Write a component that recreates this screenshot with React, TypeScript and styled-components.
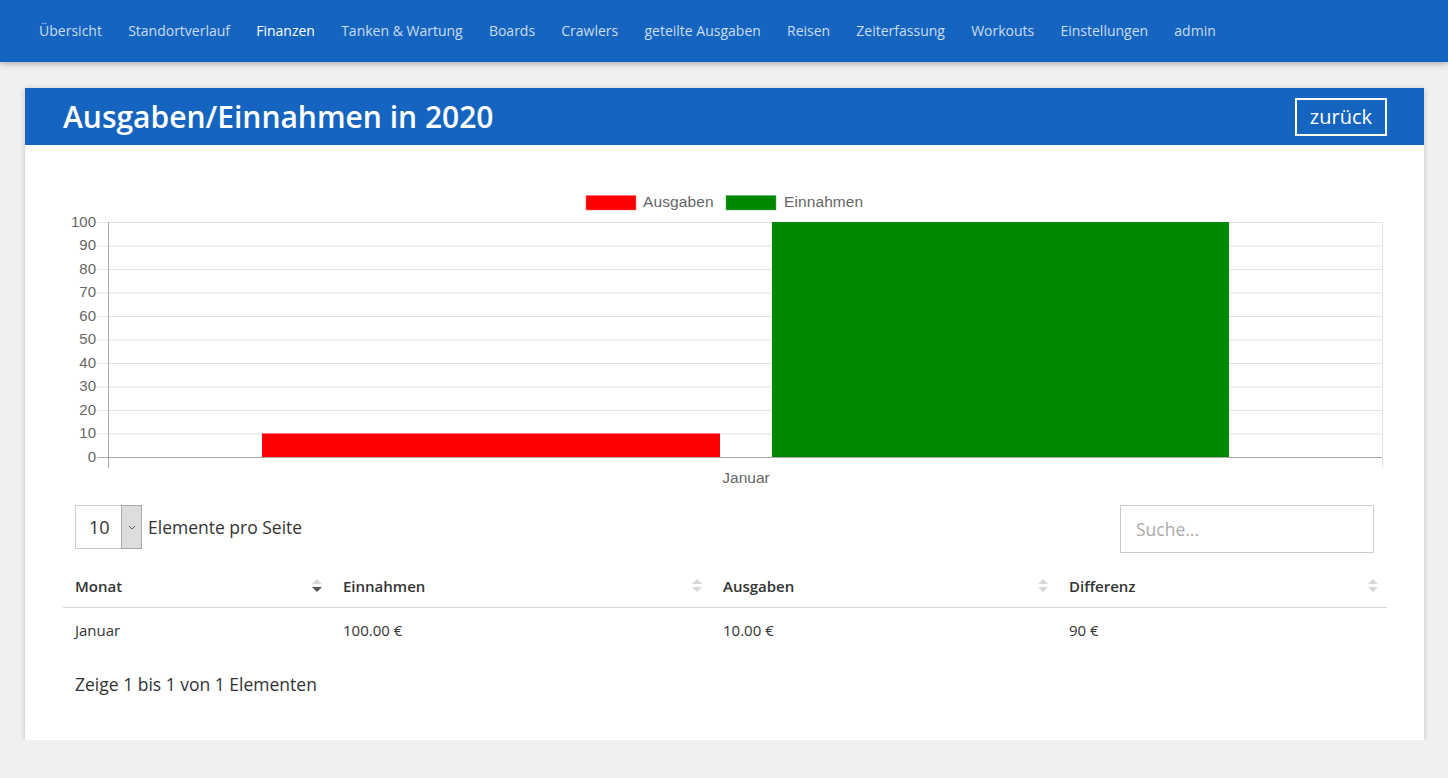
import React from "react";
import styled, { createGlobalStyle } from "styled-components";

const Global = createGlobalStyle`
  html, body { margin: 0; padding: 0; }
  body {
    background: #f0f0f0;
    font-family: "Open Sans", "Liberation Sans", sans-serif;
    color: #333;
  }
  * { box-sizing: border-box; }
`;

const Nav = styled.nav`
  height: 62px;
  background: #1565c0;
  box-shadow: 0 2px 6px rgba(0, 0, 0, 0.28);
  display: flex;
  align-items: center;
  padding-left: 26px;
`;

const NavLink = styled.a<{ $active?: boolean }>`
  font-size: 14px;
  padding: 0 13.1px;
  color: ${(p) => (p.$active ? "#ffffff" : "rgba(255,255,255,0.78)")};
  text-decoration: none;
  line-height: 20px;
  white-space: nowrap;
`;

const Card = styled.section`
  margin: 26px 24px 0 25px;
  background: #fff;
  box-shadow: 0 1px 6px rgba(0, 0, 0, 0.2);
`;

const CardHeader = styled.header`
  height: 57px;
  background: #1565c0;
  display: flex;
  align-items: center;
  justify-content: space-between;
  padding: 0 37px 0 38px;
`;

const Title = styled.h1`
  margin: 0;
  color: #fff;
  font-size: 30px;
  font-weight: 600;
  line-height: 1;
  padding-top: 1px;
`;

const BackButton = styled.button`
  height: 38px;
  padding: 0 13px;
  border: 2px solid #fff;
  background: transparent;
  color: #fff;
  font-family: inherit;
  font-size: 20px;
  line-height: 1;
  margin-top: 1px;
`;

const CardBody = styled.div`
  padding: 35px 38px 44px 38px;
`;

const ChartSvg = styled.svg`
  display: block;
  width: 1324px;
  height: 310px;
  font-family: "Liberation Sans", Arial, sans-serif;
`;

const Controls = styled.div`
  margin-top: 15px;
  padding: 0 12px;
  display: flex;
  justify-content: space-between;
  align-items: flex-start;
`;

const LengthWrap = styled.label`
  display: flex;
  align-items: center;
  gap: 6px;
  font-size: 17.5px;
  color: #333;
`;

const FakeSelect = styled.div`
  width: 67px;
  height: 44px;
  border: 1px solid #ccc;
  display: flex;
  align-items: stretch;
  justify-content: space-between;
  font-size: 18px;
`;

const SelectValue = styled.span`
  display: flex;
  align-items: center;
  padding-left: 13px;
`;

const SelectArrow = styled.span`
  width: 21px;
  background: #dddddd;
  border: 1px solid #a9a9a9;
  margin: -1px -1px -1px 0;
  display: flex;
  align-items: center;
  justify-content: center;
`;

const SearchInput = styled.input`
  width: 254px;
  height: 48px;
  border: 1px solid #ccc;
  padding: 0 15px;
  font-family: inherit;
  font-size: 17.5px;
  color: #333;
  outline: none;
  &::placeholder { color: #aaa; }
`;

const Table = styled.table`
  margin-top: 12px;
  width: 1324px;
  border-collapse: collapse;
  table-layout: fixed;
`;

const Th = styled.th`
  text-align: left;
  font-size: 15px;
  font-weight: 600;
  color: #333;
  height: 42px;
  padding: 0 12px;
  border-bottom: 1px solid #d6d6d6;
`;

const ThInner = styled.div`
  display: flex;
  align-items: center;
  justify-content: space-between;
`;

const SortIcon = styled.span<{ $down?: boolean }>`
  display: inline-flex;
  flex-direction: column;
  gap: 3px;
  margin-right: -3px;
  &::before, &::after {
    content: "";
    width: 0;
    height: 0;
    border-left: 5px solid transparent;
    border-right: 5px solid transparent;
  }
  &::before {
    border-bottom: 5px solid #d8d8d8;
  }
  &::after {
    border-top: 5px solid ${(p) => (p.$down ? "#555" : "#d8d8d8")};
  }
`;

const Td = styled.td`
  font-size: 15px;
  color: #333;
  height: 45px;
  padding: 0 12px;
`;

const Info = styled.div`
  margin-top: 20px;
  padding-left: 12px;
  font-size: 17.5px;
  color: #333;
`;

const navItems = [
  "Übersicht",
  "Standortverlauf",
  "Finanzen",
  "Tanken & Wartung",
  "Boards",
  "Crawlers",
  "geteilte Ausgaben",
  "Reisen",
  "Zeiterfassung",
  "Workouts",
  "Einstellungen",
  "admin",
];

const Y0 = 277;
const unit = 2.35;
const yOf = (v: number) => Y0 - v * unit;

function Chart() {
  const ticks = [0, 10, 20, 30, 40, 50, 60, 70, 80, 90, 100];
  return (
    <ChartSvg viewBox="0 0 1324 310">
      <rect x={523} y={15.5} width={50} height={14.5} fill="#ff0000" stroke="#ff6666" strokeWidth={0.5} />
      <text x={580} y={23} fontSize={15.5} fill="#666" dominantBaseline="middle" letterSpacing="0.1">
        Ausgaben
      </text>
      <rect x={663} y={15.5} width={50} height={14.5} fill="#008800" stroke="#66aa66" strokeWidth={0.5} />
      <text x={721} y={23} fontSize={15.5} fill="#666" dominantBaseline="middle" letterSpacing="0.1">
        Einnahmen
      </text>
      {ticks.map((t) => (
        <g key={t}>
          <line
            x1={34}
            x2={1319}
            y1={yOf(t) + 0.5}
            y2={yOf(t) + 0.5}
            stroke={t === 0 ? "#a8a8a8" : "#e3e3e3"}
            strokeWidth={1}
          />
          <text x={33} y={yOf(t) + 1} fontSize={15} fill="#666" textAnchor="end" dominantBaseline="middle">
            {t}
          </text>
        </g>
      ))}
      <line x1={45.5} x2={45.5} y1={42} y2={288} stroke="#a8a8a8" />
      <line x1={1319.5} x2={1319.5} y1={42} y2={288} stroke="#e3e3e3" />
      <rect x={199} y={yOf(10)} width={458} height={10 * unit} fill="#ff0000" />
      <rect x={709} y={yOf(100)} width={457} height={100 * unit} fill="#008800" />
      <text x={683} y={299} fontSize={15.5} fill="#666" textAnchor="middle" dominantBaseline="middle">
        Januar
      </text>
    </ChartSvg>
  );
}

export default function App() {
  return (
    <>
      <Global />
      <Nav>
        {navItems.map((n) => (
          <NavLink key={n} href="#" $active={n === "Finanzen"}>
            {n}
          </NavLink>
        ))}
      </Nav>
      <Card>
        <CardHeader>
          <Title>Ausgaben/Einnahmen in 2020</Title>
          <BackButton>zurück</BackButton>
        </CardHeader>
        <CardBody>
          <Chart />
          <Controls>
            <LengthWrap>
              <FakeSelect>
                <SelectValue>10</SelectValue>
                <SelectArrow>
                  <svg width="8" height="5" viewBox="0 0 8 5">
                    <path d="M1 1 L4 4 L7 1" fill="none" stroke="#555" strokeWidth="1" />
                  </svg>
                </SelectArrow>
              </FakeSelect>
              Elemente pro Seite
            </LengthWrap>
            <SearchInput placeholder="Suche..." />
          </Controls>
          <Table>
            <colgroup>
              <col style={{ width: 268 }} />
              <col style={{ width: 380 }} />
              <col style={{ width: 346 }} />
              <col style={{ width: 330 }} />
            </colgroup>
            <thead>
              <tr>
                <Th>
                  <ThInner>
                    Monat <SortIcon $down />
                  </ThInner>
                </Th>
                <Th>
                  <ThInner>
                    Einnahmen <SortIcon />
                  </ThInner>
                </Th>
                <Th>
                  <ThInner>
                    Ausgaben <SortIcon />
                  </ThInner>
                </Th>
                <Th>
                  <ThInner>
                    Differenz <SortIcon />
                  </ThInner>
                </Th>
              </tr>
            </thead>
            <tbody>
              <tr>
                <Td>Januar</Td>
                <Td>100.00 €</Td>
                <Td>10.00 €</Td>
                <Td>90 €</Td>
              </tr>
            </tbody>
          </Table>
          <Info>Zeige 1 bis 1 von 1 Elementen</Info>
        </CardBody>
      </Card>
    </>
  );
}
